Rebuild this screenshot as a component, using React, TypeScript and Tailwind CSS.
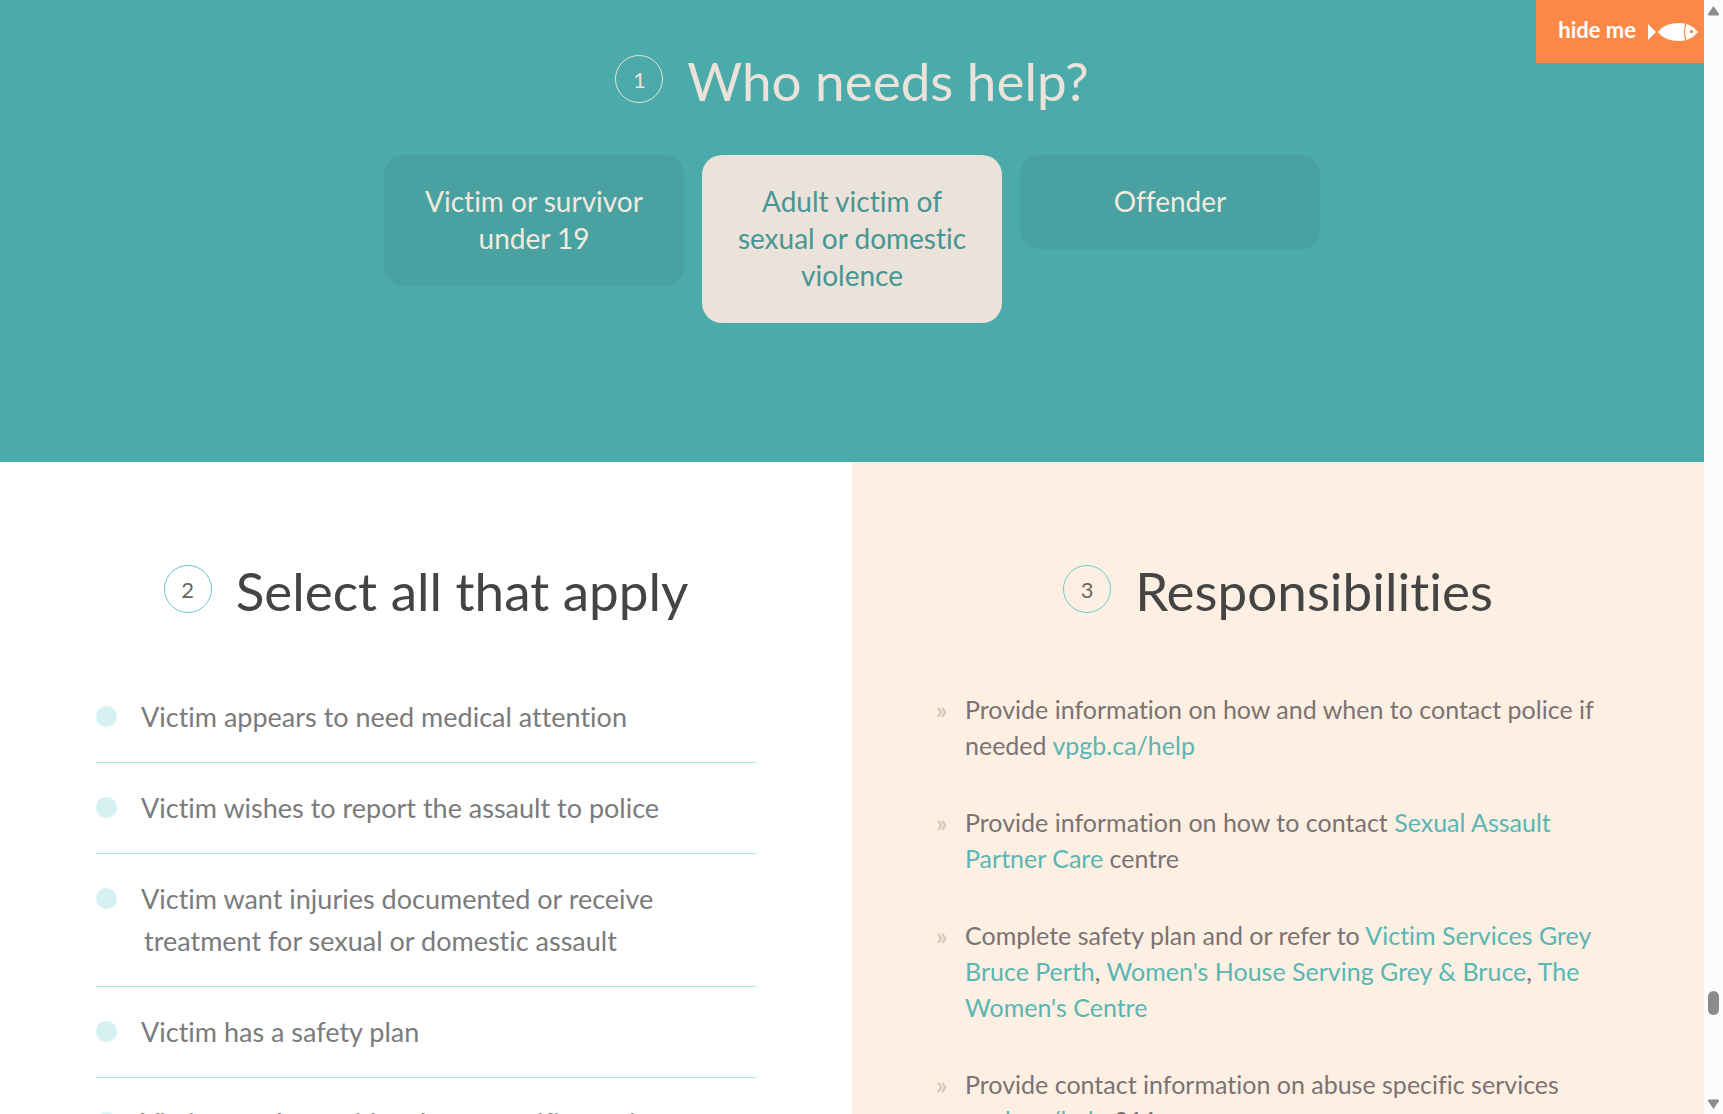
import { useState } from 'react';

interface StepHeadingProps {
  step: number;
  title: string;
  light?: boolean;
}

const audiences = [
  'Victim or survivor under 19',
  'Adult victim of sexual or domestic violence',
  'Offender',
];

const situations = [
  'Victim appears to need medical attention',
  'Victim wishes to report the assault to police',
  'Victim want injuries documented or receive treatment for sexual or domestic assault',
  'Victim has a safety plan',
  'Victim needs provider abuse specific services',
];

const linkClass = 'text-[#5ab5b4]';

// Numbered circle followed by the section title
function StepHeading({ step, title, light = false }: StepHeadingProps) {
  return (
    <div className="flex items-center justify-center gap-6">
      <span
        className={`flex size-12 shrink-0 items-center justify-center rounded-full border text-[22px] ${
          light ? 'border-[#ebe2d9] text-[#ebe2d9]' : 'border-[#6ccaca] text-[#666]'
        }`}
      >
        {step}
      </span>
      <h2 className={`pt-1 text-[53px] leading-[68px] ${light ? 'text-[#ebe2d9]' : 'text-[#444]'}`}>
        {title}
      </h2>
    </div>
  );
}

function FishIcon() {
  return (
    <svg width="50" height="20" viewBox="0 0 50 20" aria-hidden="true">
      <path d="M0 2 L8 10 L0 18 Z" fill="#fff" />
      <path d="M10 10 C14 4 22 1 31 1 C39 1 45 4 50 10 C45 16 39 19 31 19 C22 19 14 16 10 10 Z" fill="#fff" />
      <path d="M38 1 Q35 10 38 19" fill="none" stroke="#fc8848" strokeWidth="1.2" />
      <circle cx="43.5" cy="9.5" r="1.7" fill="#fc8848" />
    </svg>
  );
}

function Scrollbar() {
  return (
    <div className="fixed inset-y-0 right-0 flex w-[19px] flex-col items-center justify-between bg-[#fcfcfc] py-1">
      <svg width="13" height="12" viewBox="0 0 13 12" aria-hidden="true">
        <path d="M6.5 2 L12 10 Q12.5 11.5 11 11.5 H2 Q.5 11.5 1 10 Z" fill="#8b8b8b" />
      </svg>
      <div className="flex w-full flex-1 flex-col items-center">
        <div className="grow-[973]" />
        <div className="h-6 w-[11px] rounded-full bg-[#8b8b8b]" />
        <div className="grow-[83]" />
      </div>
      <svg width="13" height="12" viewBox="0 0 13 12" aria-hidden="true">
        <path d="M6.5 11 L12 3 Q12.5 1.5 11 1.5 H2 Q.5 1.5 1 3 Z" fill="#8b8b8b" />
      </svg>
    </div>
  );
}

function Responsibility({ children }: { children: React.ReactNode }) {
  return (
    <li className="flex gap-[18px]">
      <span className="w-[11px] shrink-0 font-bold text-[#d5c8bd]">»</span>
      <p>{children}</p>
    </li>
  );
}

export default function App() {
  const [audience, setAudience] = useState(1);
  const [checked, setChecked] = useState<number[]>([]);

  const toggle = (index: number) => {
    setChecked((prev) =>
      prev.includes(index) ? prev.filter((i) => i !== index) : [...prev, index]
    );
  };

  return (
    <div className="h-screen overflow-hidden pr-[19px] font-[Lato,sans-serif] [font-variant-ligatures:none]">
      {/* Who needs help */}
      <section className="bg-[#4aabaa] pt-[43px] pb-[139px]">
        <StepHeading step={1} title="Who needs help?" light />
        <div className="mt-10 flex items-start justify-center gap-[18px]">
          {audiences.map((label, index) => (
            <button
              key={label}
              type="button"
              aria-pressed={audience === index}
              onClick={() => setAudience(index)}
              className={`w-[300px] rounded-[20px] px-7 pt-7 pb-[29px] text-[28px] leading-[37px] ${
                audience === index ? 'bg-[#ebe2d9] text-[#469695]' : 'bg-[#49a1a1] text-[#f3e9dd]'
              }`}
            >
              {label}
            </button>
          ))}
        </div>
      </section>

      <div className="grid grid-cols-2">
        {/* Situations */}
        <section className="bg-white px-24 pt-[91px]">
          <StepHeading step={2} title="Select all that apply" />
          <ul className="mt-[47px]">
            {situations.map((label, index) => (
              <li key={label} className="border-b border-[#b0e7e6]">
                <label className="flex cursor-pointer items-start gap-6 py-6 text-[27px] leading-[42px] text-[#7b7b7b]">
                  <input
                    type="checkbox"
                    checked={checked.includes(index)}
                    onChange={() => toggle(index)}
                    className="mt-[10px] size-[21px] shrink-0 appearance-none rounded-full bg-[#d5f1f1] checked:bg-[#4aabaa]"
                  />
                  <span className="pl-[3px] -indent-[3px]">{label}</span>
                </label>
              </li>
            ))}
          </ul>
        </section>

        {/* Responsibilities */}
        <section className="bg-[#fdf0e2] px-21 pt-[91px]">
          <StepHeading step={3} title="Responsibilities" />
          <ul className="mt-[66px] flex flex-col gap-[41px] text-[25px] leading-9 text-[#7b7273]">
            <Responsibility>
              Provide information on how and when to contact police if needed{' '}
              <a href="#help" className={linkClass}>vpgb.ca/help</a>
            </Responsibility>
            <Responsibility>
              Provide information on how to contact{' '}
              <a href="#sexual-assault" className={linkClass}>Sexual Assault Partner Care</a> centre
            </Responsibility>
            <Responsibility>
              Complete safety plan and or refer to{' '}
              <a href="#victim-services" className={linkClass}>Victim Services Grey Bruce Perth</a>,{' '}
              <a href="#womens-house" className={linkClass}>Women's House Serving Grey &amp; Bruce</a>,{' '}
              <a href="#womens-centre" className={linkClass}>The Women's Centre</a>
            </Responsibility>
            <Responsibility>
              Provide contact information on abuse specific services{' '}
              <a href="#help" className={linkClass}>vpgb.ca/help</a> 211
            </Responsibility>
          </ul>
        </section>
      </div>

      <button
        type="button"
        className="fixed top-0 right-[19px] flex h-[63px] items-center gap-3 bg-[#fc8848] pr-1.5 pl-[22px] text-[22px] font-bold text-white"
      >
        <span className="pb-1">hide me</span>
        <FishIcon />
      </button>
      <Scrollbar />
    </div>
  );
}
